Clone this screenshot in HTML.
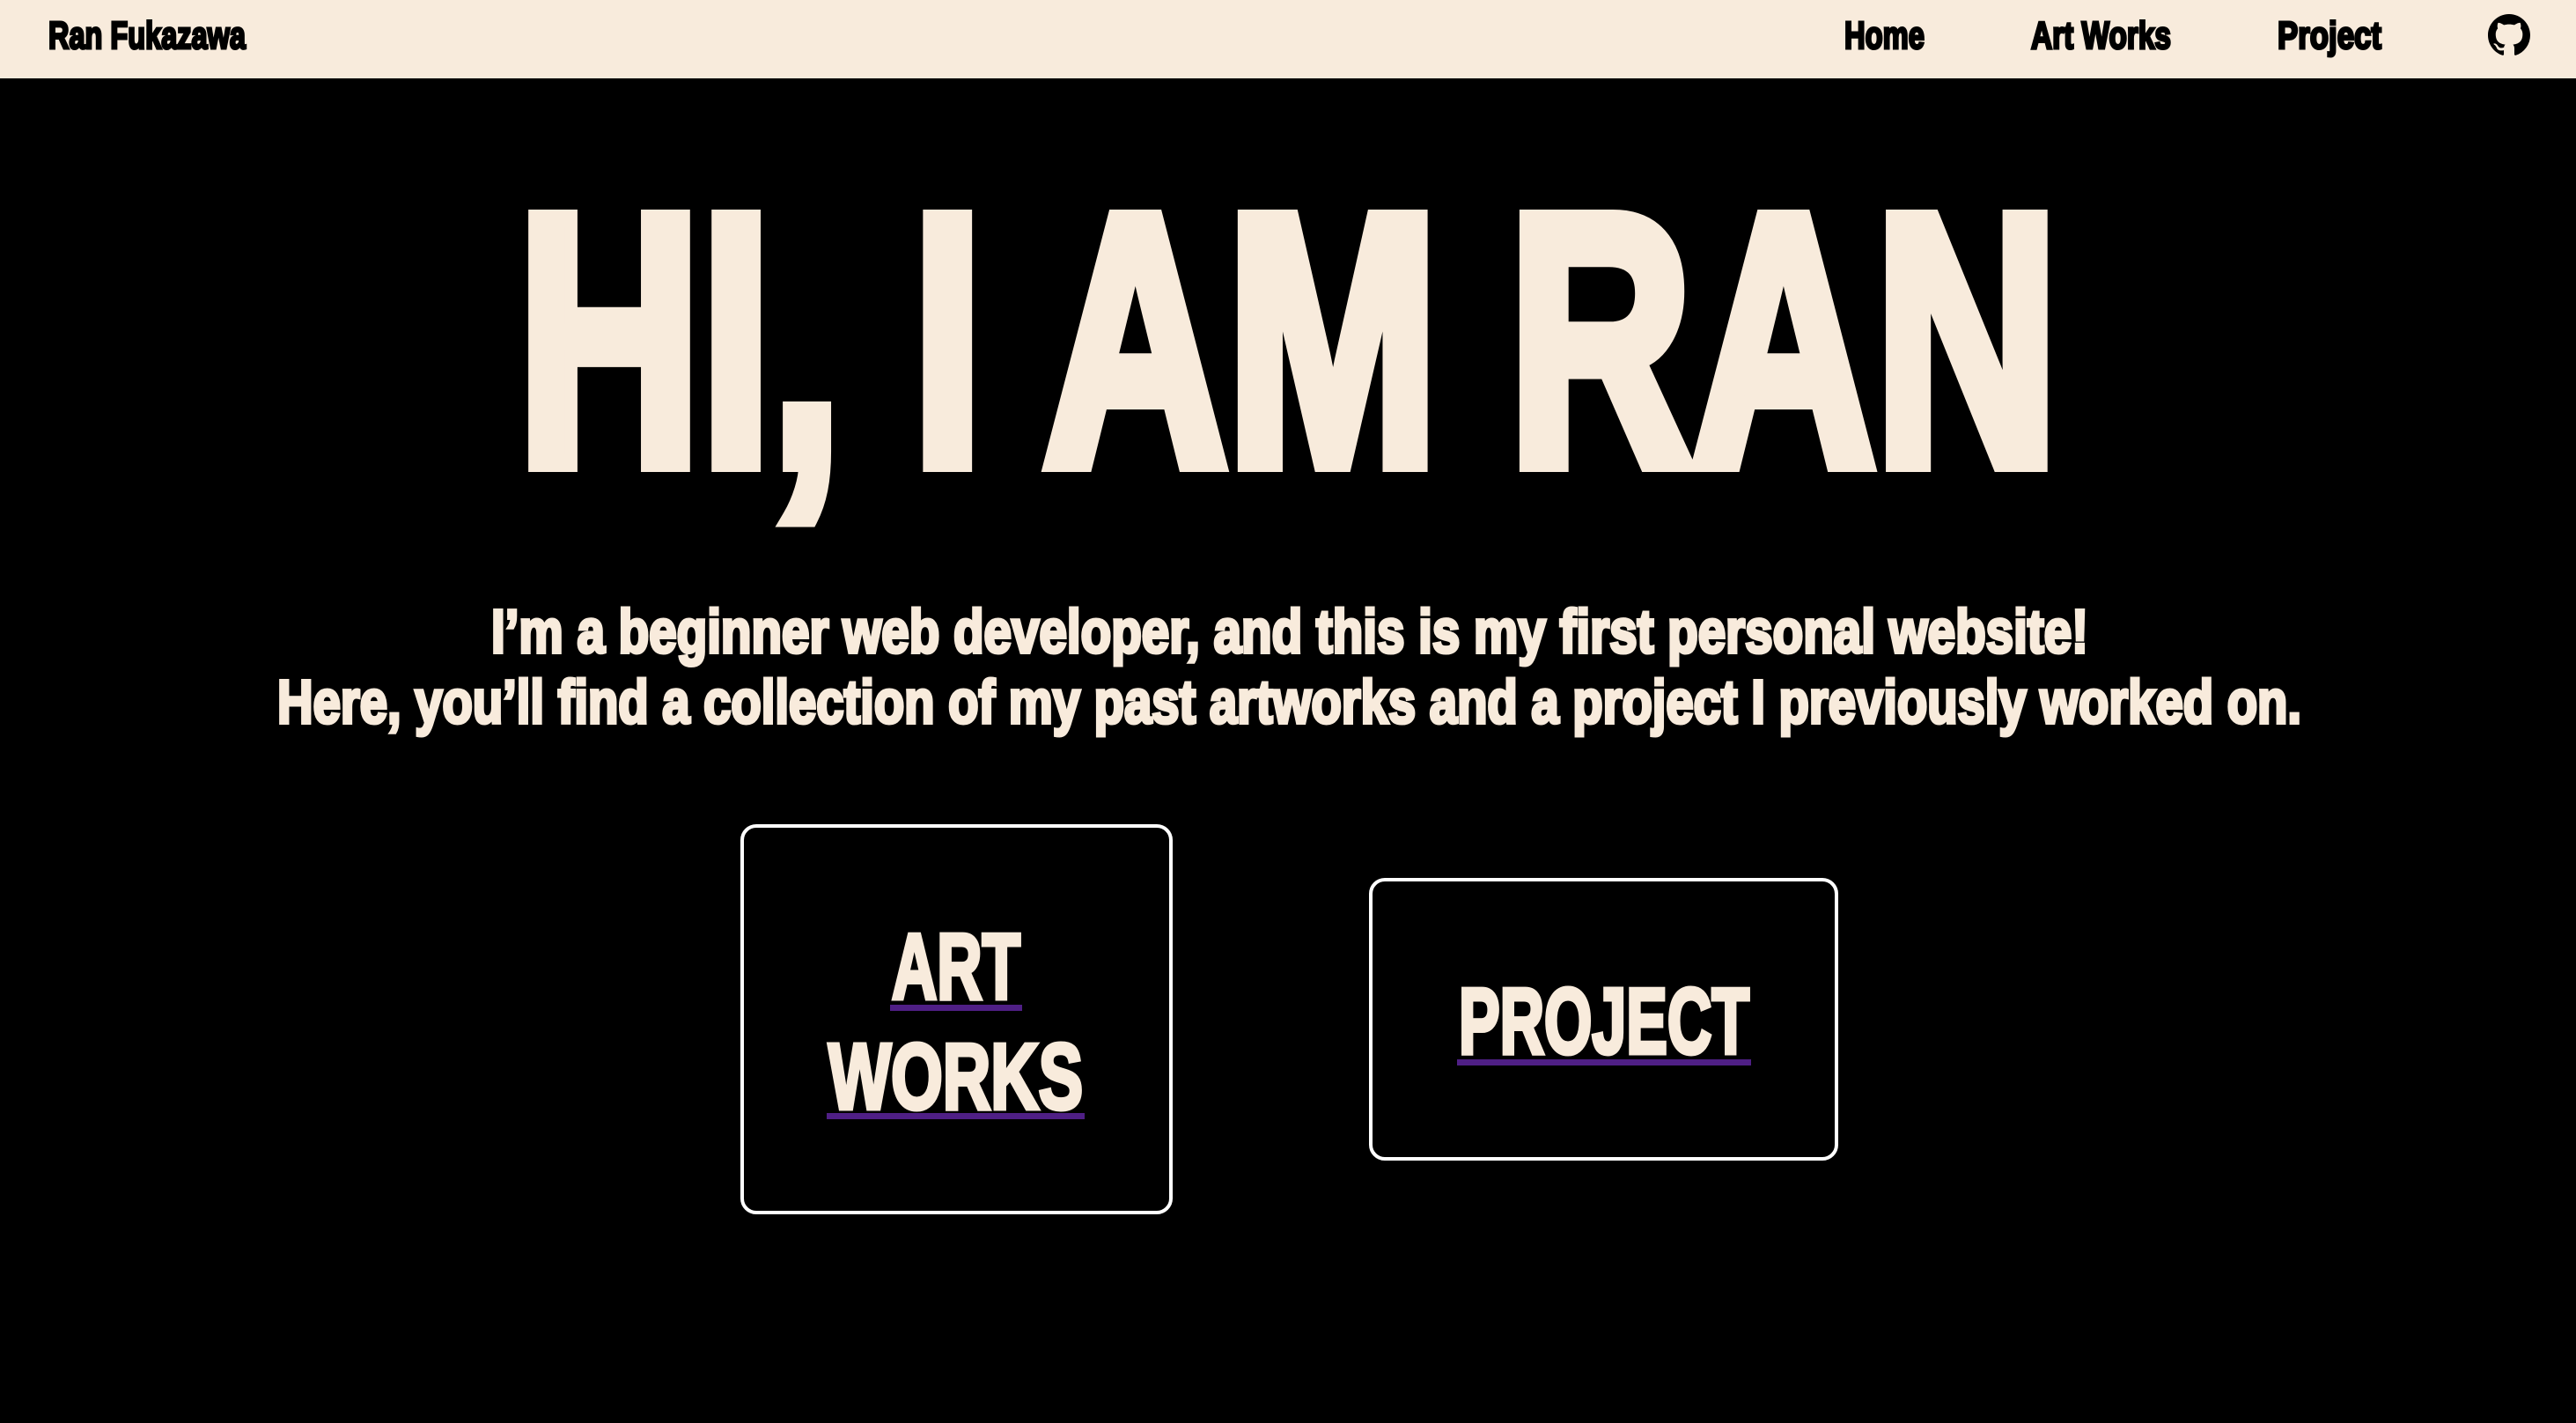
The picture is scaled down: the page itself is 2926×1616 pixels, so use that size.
<!DOCTYPE html>
<html><head><meta charset="utf-8"><style>
html,body{margin:0;padding:0;background:#000;width:2926px;height:1616px;overflow:hidden}
svg{display:block}
text{font-family:"Liberation Sans",sans-serif;font-weight:700}
</style></head><body>
<svg width="2926" height="1616" viewBox="0 0 2926 1616" xmlns="http://www.w3.org/2000/svg">
<rect x="0" y="0" width="2926" height="1616" fill="#000"/>
<rect x="0" y="0" width="2926" height="89" fill="#f8ebdc"/>
<g fill="#000" stroke="#000" stroke-width="3" font-size="44" font-weight="700">
<text x="55" y="55" textLength="224" lengthAdjust="spacingAndGlyphs">Ran Fukazawa</text>
<text x="2095" y="55" textLength="91" lengthAdjust="spacingAndGlyphs">Home</text>
<text x="2307" y="55" textLength="159" lengthAdjust="spacingAndGlyphs">Art Works</text>
<text x="2587" y="55" textLength="118" lengthAdjust="spacingAndGlyphs">Project</text>
</g>
<g transform="translate(2826,16) scale(3)" fill="#000">
<path d="M8 0C3.580 0 0 3.58 0 8c0 3.54 2.29 6.53 5.47 7.59.4.07.55-.17.55-.38 0-.19-.01-.82-.01-1.490-2.01.37-2.530-.49-2.69-.94-.09-.23-.48-.94-.82-1.13-.28-.15-.68-.52-.01-.53.63-.01 1.08.58 1.23.82.72 1.21 1.870.87 2.33.66.07-.52.28-.87.51-1.07-1.78-.2-3.64-.89-3.64-3.95 0-.87.31-1.59.82-2.15-.08-.2-.36-1.02.08-2.12 0 0 .67-.21 2.2.82.64-.18 1.32-.27 2-.27.68 0 1.36.09 2 .27 1.53-1.04 2.2-.82 2.2-.82.44 1.1.16 1.92.08 2.12.51.56.82 1.27.82 2.15 0 3.07-1.87 3.75-3.65 3.95.29.25.54.73.54 1.48 0 1.07-.01 1.930-.01 2.2 0 .21.15.46.55.38A8.013 8.013 0 0016 8c0-4.42-3.58-8-8-8z"/>
</g>
<g fill="#f8ebdc" stroke="#f8ebdc" font-weight="700">
<text x="588" y="526" font-size="404" stroke-width="20" textLength="1750" lengthAdjust="spacingAndGlyphs">HI, I AM RAN</text>
<text x="558" y="741" font-size="70" stroke-width="4" textLength="1814" lengthAdjust="spacingAndGlyphs">I’m a beginner web developer, and this is my first personal website!</text>
<text x="315" y="821" font-size="70" stroke-width="4" textLength="2299" lengthAdjust="spacingAndGlyphs">Here, you’ll find a collection of my past artworks and a project I previously worked on.</text>
</g>
<rect x="843" y="938" width="487" height="439" rx="16" fill="none" stroke="#fff" stroke-width="4"/>
<rect x="1557" y="999" width="529" height="317" rx="16" fill="none" stroke="#fff" stroke-width="4"/>
<g fill="#f8ebdc" stroke="#f8ebdc" stroke-width="5" font-size="106" font-weight="700">
<text x="1013" y="1134" textLength="146" lengthAdjust="spacingAndGlyphs">ART</text>
<text x="941" y="1259" textLength="289" lengthAdjust="spacingAndGlyphs">WORKS</text>
<text x="1657" y="1196" textLength="330" lengthAdjust="spacingAndGlyphs">PROJECT</text>
</g>
<g fill="#4f1f85">
<rect x="1011" y="1141" width="150" height="7"/>
<rect x="939" y="1264" width="293" height="7"/>
<rect x="1655" y="1203" width="334" height="7"/>
</g>
</svg>
</body></html>
